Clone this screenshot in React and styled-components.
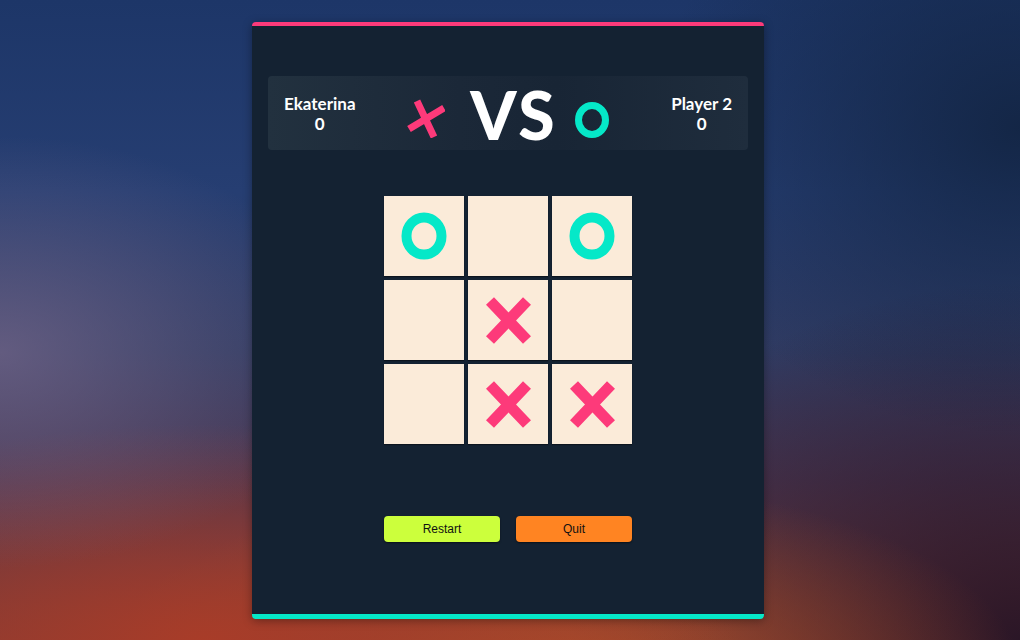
import React from 'react';
import styled, { createGlobalStyle } from 'styled-components';

const GlobalStyle = createGlobalStyle`
  html, body {
    margin: 0;
    padding: 0;
    height: 100%;
  }
  body {
    font-family: Lato, "Noto Sans", sans-serif;
    background:
      radial-gradient(ellipse 45% 45% at 0% 55%, rgba(120, 105, 140, 0.7), rgba(120, 105, 140, 0) 75%),
      radial-gradient(ellipse 70% 45% at 20% 100%, rgba(170, 60, 40, 0.95), rgba(170, 60, 40, 0) 75%),
      radial-gradient(ellipse 60% 40% at 55% 105%, rgba(175, 80, 40, 0.9), rgba(175, 80, 40, 0) 75%),
      radial-gradient(ellipse 55% 70% at 100% 100%, rgba(38, 20, 38, 0.95), rgba(38, 20, 38, 0) 80%),
      radial-gradient(ellipse 45% 60% at 100% 20%, rgba(18, 36, 66, 0.9), rgba(18, 36, 66, 0) 80%),
      linear-gradient(180deg, #1d3668 0%, #263e72 30%, #303b62 55%, #4a3650 75%, #7a3a36 100%);
  }
  #root {
    min-height: 100vh;
  }
`;

const Page = styled.div`
  display: flex;
  justify-content: center;
  padding: 22px 4px 0 0;
  height: 640px;
  box-sizing: border-box;
`;

const Card = styled.div`
  width: 512px;
  height: 597px;
  box-sizing: border-box;
  background: #142232;
  border-top: 4px solid #fd3a7a;
  border-bottom: 5px solid #05e8c8;
  border-radius: 4px;
  box-shadow: 0 2px 10px rgba(0, 0, 0, 0.35);
  display: flex;
  flex-direction: column;
  align-items: center;
  padding: 50px 16px 0;
`;

const ScoreBar = styled.div`
  width: 100%;
  height: 74px;
  border-radius: 4px;
  background: linear-gradient(90deg, #22313f 0%, #1b2838 40%, #182535 60%, #1f2d3d 100%);
  display: grid;
  grid-template-columns: 1fr auto 1fr;
  align-items: center;
  padding: 0 16px;
  box-sizing: border-box;
`;

const Player = styled.div`
  justify-self: ${p => p.side};
  text-align: center;
  color: #fff;
  font-weight: 700;
  font-size: 17px;
  line-height: 20px;
  margin-top: 1px;
`;

const Versus = styled.div`
  display: flex;
  align-items: flex-start;
`;

const Mark = styled.div`
  display: flex;
  margin-top: ${p => p.top}px;
`;

const VsText = styled.span`
  color: #fff;
  font-weight: 900;
  font-size: 66px;
  line-height: 66px;
  letter-spacing: 3px;
  margin: 3px 17px 0 25px;
`;

const Board = styled.div`
  margin-top: 46px;
  display: grid;
  grid-template-columns: repeat(3, 80px);
  grid-auto-rows: 80px;
  gap: 4px;
`;

const Cell = styled.div`
  background: #fbebd9;
  box-shadow: 0 1px 1px rgba(0, 0, 0, 0.4);
  display: flex;
  align-items: center;
  justify-content: center;
`;

const Buttons = styled.div`
  margin-top: 72px;
  display: flex;
  gap: 16px;
`;

const Button = styled.button`
  width: 116px;
  height: 26px;
  border: none;
  border-radius: 4px;
  background: ${p => p.bg};
  color: #111;
  font-family: "Liberation Sans", Arial, sans-serif;
  font-size: 12px;
  box-shadow: 0 1px 2px rgba(0, 0, 0, 0.5);
  cursor: pointer;
`;

const CrossMark = () => (
  <svg width="47" height="47" viewBox="0 0 47 47">
    <path d="M5 4 L42 43 M42 4 L5 43" stroke="#fd3a7a" strokeWidth="11" fill="none" />
  </svg>
);

const RingMark = () => (
  <svg width="46" height="48" viewBox="0 0 46 48">
    <ellipse cx="23" cy="24" rx="17.5" ry="18.5" stroke="#05e8c8" strokeWidth="10" fill="none" />
  </svg>
);

const TiltedCross = () => (
  <svg width="38" height="40" viewBox="0 0 38 40">
    <path d="M2 31 L37 10 M10 3 L27 39" stroke="#fd3a7a" strokeWidth="7" fill="none" />
  </svg>
);

const SmallRing = () => (
  <svg width="34" height="36" viewBox="0 0 34 36">
    <ellipse cx="17" cy="18" rx="13.5" ry="14.5" stroke="#05e8c8" strokeWidth="7" fill="none" />
  </svg>
);

const board = ['o', '', 'o', '', 'x', '', '', 'x', 'x'];

export default function App() {
  return (
    <>
      <GlobalStyle />
      <Page>
        <Card>
          <ScoreBar>
            <Player side="start">
              <div>Ekaterina</div>
              <div>0</div>
            </Player>
            <Versus>
              <Mark top={19}>
                <TiltedCross />
              </Mark>
              <VsText>VS</VsText>
              <Mark top={23}>
                <SmallRing />
              </Mark>
            </Versus>
            <Player side="end">
              <div>Player 2</div>
              <div>0</div>
            </Player>
          </ScoreBar>

          <Board>
            {board.map((v, i) => (
              <Cell key={i}>
                {v === 'x' && <CrossMark />}
                {v === 'o' && <RingMark />}
              </Cell>
            ))}
          </Board>

          <Buttons>
            <Button bg="#ccff3c">Restart</Button>
            <Button bg="#ff8422">Quit</Button>
          </Buttons>
        </Card>
      </Page>
    </>
  );
}
